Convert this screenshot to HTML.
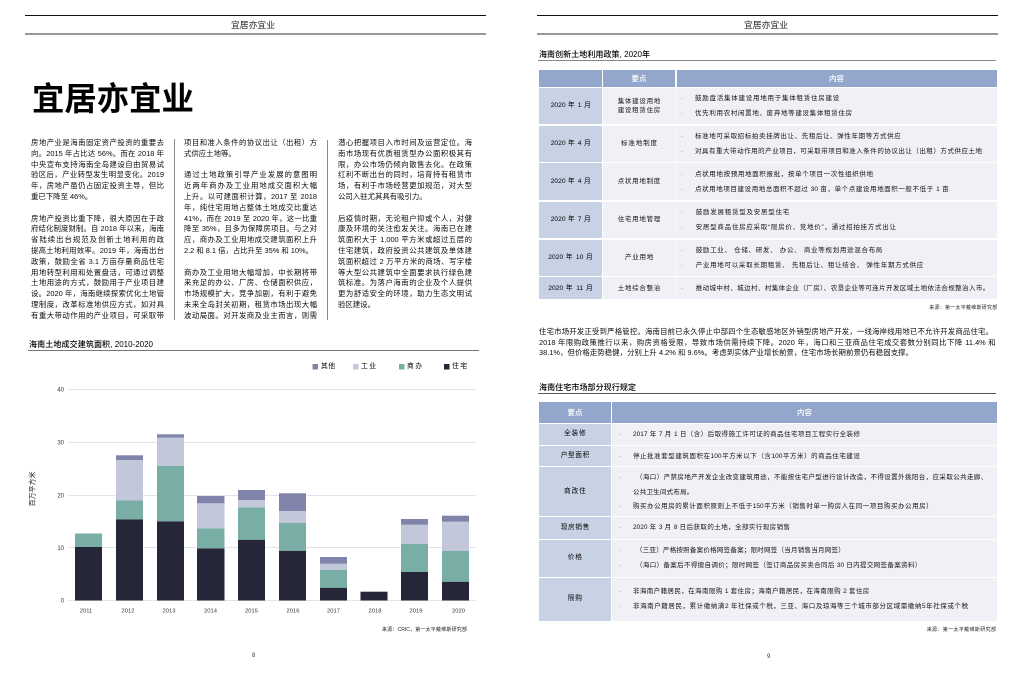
<!DOCTYPE html>
<html lang="zh"><head><meta charset="utf-8"><title>宜居亦宜业</title>
<style>
html,body{margin:0;padding:0;background:#fff}
body{width:1024px;height:678px;overflow:hidden;position:relative;font-family:"Liberation Sans","Noto Sans CJK SC",sans-serif;color:#222}
#p{position:absolute;left:0;top:0;width:1024px;height:678px;filter:blur(.3px)}
.r{position:absolute}
.t{position:absolute;line-height:10px;height:10px;white-space:nowrap}
.j{position:absolute;line-height:10px;height:11px;overflow:hidden;text-align:justify;text-align-last:justify;font-size:6.5px;color:#111}
.b{font-size:7.4px;color:#0c0c0c}
.c{text-align:center;text-align-last:center}
.h{color:#fff;font-size:7.5px;font-weight:500}
.d{position:absolute;width:6px;font-size:6.5px;line-height:10px;height:10px;color:#555}
.m{color:#000;font-size:6.7px}
.s{font-size:5px;color:#222}
.tt{font-size:8px;font-weight:500;color:#000}
</style></head><body><div id="p">

<!-- Page 8 -->
<div class="r" style="left:25px;top:15px;width:461px;height:1px;background:#111"></div>
<div class="r" style="left:25px;top:33px;width:461px;height:2px;background:#999"></div>
<div class="j c" style="left:213px;top:20px;width:80px;font-size:8.8px;color:#222">宜居亦宜业</div>

<div class="t" style="left:32px;top:81.500px;height:34px;line-height:34px;font-size:32.4px;font-weight:700;color:#000">宜居亦宜业</div>

<div class="r" style="left:174px;top:139px;width:1px;height:181px;background:#8a8a8a"></div>
<div class="r" style="left:327px;top:140px;width:1px;height:180px;background:#8a8a8a"></div>

<!-- col 1 -->
<div class="j b" style="left:31px;top:138px;width:133px">房地产业是海南固定资产投资的重要去</div>
<div class="j b" style="left:31px;top:148.8px;width:133px">向。2015 年占比达 56%。而在 2018 年</div>
<div class="j b" style="left:31px;top:159.6px;width:133px">中央宣布支持海南全岛建设自由贸易试</div>
<div class="j b" style="left:31px;top:170.4px;width:133px">验区后，产业转型发生明显变化。2019</div>
<div class="j b" style="left:31px;top:181.2px;width:133px">年，房地产虽仍占固定投资主导，但比</div>
<div class="t b" style="left:31px;top:192px">重已下降至 46%。</div>
<div class="j b" style="left:31px;top:213.6px;width:133px">房地产投资比重下降，很大原因在于政</div>
<div class="j b" style="left:31px;top:224.4px;width:133px">府结化制度财制。自 2018 年以来，海南</div>
<div class="j b" style="left:31px;top:235.2px;width:133px">省陆续出台规范及创新土地利用的政策，</div>
<div class="j b" style="left:31px;top:246px;width:133px">提高土地利用效率。2019 年，海南出台</div>
<div class="j b" style="left:31px;top:256.8px;width:133px">政策，鼓励全省 3.1 万亩存量商品住宅</div>
<div class="j b" style="left:31px;top:267.6px;width:133px">用地转型利用和处置盘活，可通过调整</div>
<div class="j b" style="left:31px;top:278.4px;width:133px">土地用途的方式，鼓励用于产业项目建</div>
<div class="j b" style="left:31px;top:289.2px;width:133px">设。2020 年，海南继续探索优化土地管</div>
<div class="j b" style="left:31px;top:300px;width:133px">理制度，改革标准地供应方式，如对具</div>
<div class="j b" style="left:31px;top:310.8px;width:133px">有重大带动作用的产业项目，可采取带</div>

<!-- col 2 -->
<div class="j b" style="left:184px;top:138px;width:133px">项目和准入条件的协议出让（出租）方</div>
<div class="t b" style="left:184px;top:148.8px">式供应土地等。</div>
<div class="j b" style="left:184px;top:170.4px;width:133px">通过土地政策引导产业发展的意图明显，</div>
<div class="j b" style="left:184px;top:181.2px;width:133px">近两年商办及工业用地成交面积大幅</div>
<div class="j b" style="left:184px;top:192px;width:133px">上升。以可建面积计算，2017 至 2018</div>
<div class="j b" style="left:184px;top:202.8px;width:133px">年，纯住宅用地占整体土地成交比重达</div>
<div class="j b" style="left:184px;top:213.6px;width:133px">41%，而在 2019 至 2020 年，这一比重</div>
<div class="j b" style="left:184px;top:224.4px;width:133px">降至 35%，且多为保障房项目。与之对</div>
<div class="j b" style="left:184px;top:235.2px;width:133px">应，商办及工业用地成交建筑面积上升</div>
<div class="t b" style="left:184px;top:246px">2.2 和 8.1 倍，占比升至 35% 和 10%。</div>
<div class="j b" style="left:184px;top:267.6px;width:133px">商办及工业用地大幅增加，中长期将带</div>
<div class="j b" style="left:184px;top:278.4px;width:133px">来充足的办公、厂房、仓储面积供应，</div>
<div class="j b" style="left:184px;top:289.2px;width:133px">市场规模扩大，竞争加剧，有利于避免</div>
<div class="j b" style="left:184px;top:300px;width:133px">未来全岛封关初期，租赁市场出现大幅</div>
<div class="j b" style="left:184px;top:310.8px;width:133px">波动局面。对开发商及业主而言，则需</div>

<!-- col 3 -->
<div class="j b" style="left:338px;top:138px;width:134px">潜心把握项目入市时间及运营定位。海</div>
<div class="j b" style="left:338px;top:148.8px;width:134px">南市场现有优质租赁型办公面积极其有</div>
<div class="j b" style="left:338px;top:159.6px;width:134px">限，办公市场仍倾向散售去化。在政策</div>
<div class="j b" style="left:338px;top:170.4px;width:134px">红利不断出台的同时，培育持有租赁市</div>
<div class="j b" style="left:338px;top:181.2px;width:134px">场，有利于市场经营更加规范，对大型</div>
<div class="t b" style="left:338px;top:192px">公司入驻尤其具有吸引力。</div>
<div class="j b" style="left:338px;top:213.6px;width:134px">后疫情时期，无论租户抑或个人，对健</div>
<div class="j b" style="left:338px;top:224.4px;width:134px">康及环境的关注愈发关注。海南已在建</div>
<div class="j b" style="left:338px;top:235.2px;width:134px">筑面积大于 1,000 平方米或超过五层的</div>
<div class="j b" style="left:338px;top:246px;width:134px">住宅建筑，政府投资公共建筑及单体建</div>
<div class="j b" style="left:338px;top:256.8px;width:134px">筑面积超过 2 万平方米的商场、写字楼</div>
<div class="j b" style="left:338px;top:267.6px;width:134px">等大型公共建筑中全面要求执行绿色建</div>
<div class="j b" style="left:338px;top:278.4px;width:134px">筑标准。为落户海南的企业及个人提供</div>
<div class="j b" style="left:338px;top:289.2px;width:134px">更为舒适安全的环境，助力生态文明试</div>
<div class="t b" style="left:338px;top:300px">验区建设。</div>

<!-- chart -->
<div class="j tt" style="left:29px;top:340px;width:124px">海南土地成交建筑面积, 2010-2020</div>
<div class="r" style="left:28px;top:350px;width:451px;height:1px;background:#777"></div>

<svg class="r" style="left:0;top:0" width="512" height="678" xmlns="http://www.w3.org/2000/svg">
<g fill="#e2e4ea">
<rect x="68" y="389" width="408" height="1"/><rect x="68" y="442" width="408" height="1"/><rect x="68" y="495" width="408" height="1"/><rect x="68" y="547" width="408" height="1"/><rect x="68" y="600" width="408" height="1"/>
</g>
<g fill="#252638">
<rect x="75" y="547" width="27" height="53.5"/><rect x="116" y="519.3" width="27" height="81.2"/><rect x="157" y="521.3" width="27" height="79.2"/><rect x="197" y="548.3" width="27.5" height="52.2"/><rect x="238" y="539.7" width="27" height="60.8"/><rect x="279" y="550.7" width="27" height="49.8"/><rect x="320" y="587.7" width="27" height="12.8"/><rect x="360.5" y="591.7" width="27" height="8.8"/><rect x="401" y="572" width="27" height="28.5"/><rect x="442" y="581.7" width="27" height="18.8"/>
</g>
<g fill="#78aea5">
<rect x="75" y="533.5" width="27" height="13.5"/><rect x="116" y="500.5" width="27" height="18.8"/><rect x="157" y="466" width="27" height="55.3"/><rect x="197" y="528.3" width="27.5" height="20"/><rect x="238" y="507.3" width="27" height="32.4"/><rect x="279" y="523" width="27" height="27.7"/><rect x="320" y="569.7" width="27" height="18"/><rect x="401" y="544" width="27" height="28"/><rect x="442" y="551" width="27" height="30.7"/>
</g>
<g fill="#c2c7da">
<rect x="116" y="460" width="27" height="40.5"/><rect x="157" y="437.7" width="27" height="28.3"/><rect x="197" y="503.3" width="27.5" height="25"/><rect x="238" y="500" width="27" height="7.3"/><rect x="279" y="511" width="27" height="12"/><rect x="320" y="563.7" width="27" height="6"/><rect x="401" y="524.7" width="27" height="19.3"/><rect x="442" y="521.7" width="27" height="29.3"/>
</g>
<g fill="#8084ab">
<rect x="116" y="455.3" width="27" height="4.7"/><rect x="157" y="434.3" width="27" height="3.4"/><rect x="197" y="496" width="27.5" height="7.3"/><rect x="238" y="490" width="27" height="10"/><rect x="279" y="493.3" width="27" height="17.7"/><rect x="320" y="557" width="27" height="6.7"/><rect x="401" y="519" width="27" height="5.7"/><rect x="442" y="515.7" width="27" height="6"/>
</g>
<rect x="312.500" y="364" width="5.500" height="5.500" fill="#8084ab"/>
<rect x="353" y="364" width="5.500" height="5.500" fill="#c2c7da"/>
<rect x="399" y="364" width="5.500" height="5.500" fill="#78aea5"/>
<rect x="444" y="364" width="5.500" height="5.500" fill="#252638"/>
<g font-family="Liberation Sans, sans-serif" font-size="6" fill="#333" text-anchor="end">
<text x="64" y="391.500">40</text><text x="64" y="444.500">30</text><text x="64" y="497.500">20</text><text x="64" y="550">10</text><text x="64" y="602.500">0</text>
</g>
<g font-family="Liberation Sans, sans-serif" font-size="5.800" fill="#333" text-anchor="middle">
<text x="86" y="612.500">2011</text><text x="128" y="612.500">2012</text><text x="169" y="612.500">2013</text><text x="210.500" y="612.500">2014</text><text x="251.500" y="612.500">2015</text><text x="293" y="612.500">2016</text><text x="333.500" y="612.500">2017</text><text x="375" y="612.500">2018</text><text x="416" y="612.500">2019</text><text x="458.500" y="612.500">2020</text>
</g>
<text transform="translate(34.500 489) rotate(-90)" font-family="Liberation Sans, Noto Sans CJK SC, sans-serif" font-size="7" fill="#222" text-anchor="middle">百万平方米</text>
</svg>

<div class="j m" style="left:321px;top:361.500px;width:14px;font-size:6.800px">其他</div>
<div class="j m" style="left:361px;top:361.500px;width:15px;font-size:6.800px">工业</div>
<div class="j m" style="left:407px;top:361.500px;width:15px;font-size:6.800px">商办</div>
<div class="j m" style="left:452px;top:361.500px;width:15px;font-size:6.800px">住宅</div>

<div class="j s" style="left:382px;top:625px;width:85px">来源：CRIC，第一太平戴维斯研究部</div>
<div class="t" style="left:252px;top:651px;font-size:6px;color:#333">8</div>

<!-- Page 9 -->
<div class="r" style="left:537px;top:15px;width:461px;height:1px;background:#111"></div>
<div class="r" style="left:537px;top:33px;width:461px;height:2px;background:#999"></div>
<div class="j c" style="left:726px;top:20px;width:80px;font-size:8.800px;color:#222">宜居亦宜业</div>

<div class="j tt" style="left:539px;top:49.500px;width:111px">海南创新土地利用政策, 2020年</div>
<div class="r" style="left:538px;top:60px;width:458px;height:1px;background:#888"></div>

<!-- table 1 -->
<div class="r" style="left:539px;top:70px;width:63px;height:17px;background:#93a7cc"></div>
<div class="r" style="left:603px;top:70px;width:72px;height:17px;background:#93a7cc"></div>
<div class="r" style="left:676px;top:70px;width:321px;height:17px;background:#93a7cc"></div>
<div class="j h c" style="left:603px;top:73.500px;width:72px">要点</div>
<div class="j h c" style="left:676px;top:73.500px;width:321px">内容</div>

<div class="r" style="left:539px;top:88px;width:63px;height:36px;background:#c8d2e5"></div><div class="r" style="left:603px;top:88px;width:394px;height:36px;background:#eff1f6"></div>
<div class="r" style="left:539px;top:125.500px;width:63px;height:36.500px;background:#c8d2e5"></div><div class="r" style="left:603px;top:125.500px;width:394px;height:36.500px;background:#eff1f6"></div>
<div class="r" style="left:539px;top:163px;width:63px;height:37px;background:#c8d2e5"></div><div class="r" style="left:603px;top:163px;width:394px;height:37px;background:#eff1f6"></div>
<div class="r" style="left:539px;top:201.500px;width:63px;height:36.500px;background:#c8d2e5"></div><div class="r" style="left:603px;top:201.500px;width:394px;height:36.500px;background:#eff1f6"></div>
<div class="r" style="left:539px;top:239.500px;width:63px;height:36.500px;background:#c8d2e5"></div><div class="r" style="left:603px;top:239.500px;width:394px;height:36.500px;background:#eff1f6"></div>
<div class="r" style="left:539px;top:277px;width:63px;height:22px;background:#c8d2e5"></div><div class="r" style="left:603px;top:277px;width:394px;height:22px;background:#eff1f6"></div>
<div class="r" style="left:675.500px;top:70px;width:1px;height:229px;background:#f6f7fa"></div>

<div class="j m" style="left:550.700px;top:101px;width:40px">2020 年 1 月</div>
<div class="j m" style="left:550.700px;top:139px;width:40px">2020 年 4 月</div>
<div class="j m" style="left:550.700px;top:177px;width:40px">2020 年 4 月</div>
<div class="j m" style="left:550.700px;top:215px;width:40px">2020 年 7 月</div>
<div class="j m" style="left:548.300px;top:253px;width:44.400px">2020 年 10 月</div>
<div class="j m" style="left:548.300px;top:283.700px;width:44.400px">2020 年 11 月</div>

<div class="j" style="left:617.700px;top:96.700px;width:42.600px">集体建设用地</div>
<div class="j" style="left:617.700px;top:106.300px;width:42.600px">建设租赁住房</div>
<div class="j" style="left:621px;top:139px;width:36px">标准地制度</div>
<div class="j" style="left:617.700px;top:177px;width:42.600px">点状用地制度</div>
<div class="j" style="left:617.700px;top:215px;width:42.600px">住宅用地管理</div>
<div class="j" style="left:625px;top:253px;width:28.300px">产业用地</div>
<div class="j" style="left:617.700px;top:283.700px;width:42.600px">土地综合整治</div>

<div class="d" style="left:681px;top:94.300px">·</div><div class="d" style="left:681px;top:108.700px">·</div>
<div class="d" style="left:681px;top:132px">·</div><div class="d" style="left:681px;top:146.700px">·</div>
<div class="d" style="left:681px;top:170px">·</div><div class="d" style="left:681px;top:184.700px">·</div>
<div class="d" style="left:681px;top:208px">·</div><div class="d" style="left:681px;top:222.700px">·</div>
<div class="d" style="left:681px;top:246px">·</div><div class="d" style="left:681px;top:260.700px">·</div>
<div class="d" style="left:681px;top:283.700px">·</div>

<div class="j" style="left:695px;top:94.300px;width:144.300px">鼓励盘活集体建设用地用于集体租赁住房建设</div>
<div class="j" style="left:695px;top:108.700px;width:157px">优先利用农村闲置地、废弃地等建设集体租赁住房</div>
<div class="j" style="left:695px;top:132px;width:205.700px">标准地可采取招标拍卖挂牌出让、先租后让、弹性年期等方式供应</div>
<div class="j" style="left:695px;top:146.700px;width:287px">对具有重大带动作用的产业项目，可采取带项目和准入条件的协议出让（出租）方式供应土地</div>
<div class="j" style="left:695px;top:170px;width:178px">点状用地按预用地面积报批，按单个项目一次性组织供地</div>
<div class="j" style="left:695px;top:184.700px;width:253.700px">点状用地项目建设用地总面积不超过 30 亩，单个点建设用地面积一般不低于 1 亩</div>
<div class="j" style="left:695.700px;top:208px;width:93.600px">鼓励发展租赁型及安居型住宅</div>
<div class="j" style="left:695.700px;top:222.700px;width:200.300px">安居型商品住房应采取“限房价、竞地价”，通过招拍挂方式出让</div>
<div class="j" style="left:695.700px;top:246px;width:186.600px">鼓励工业、 仓储、研发、 办公、 商业等规划用途混合布局</div>
<div class="j" style="left:695.700px;top:260.700px;width:227.600px">产业用地可以采取长期租赁、 先租后让、租让结合、 弹性年期方式供应</div>
<div class="j" style="left:695.700px;top:283.700px;width:293.600px">推动城中村、城边村、村集体企业（厂房）、农垦企业等可连片开发区域土地依法合规整治入市。</div>

<div class="j s" style="left:929.300px;top:303.300px;width:68px">来源：第一太平戴维斯研究部</div>

<!-- paragraph -->
<div class="j b" style="left:539px;top:327px;width:454px">住宅市场开发正受到严格管控。海南目前已永久停止中部四个生态敏感地区外销型房地产开发，一线海岸线用地已不允许开发商品住宅。</div>
<div class="j b" style="left:539px;top:337.700px;width:456.700px">2018 年限购政策推行以来，购房资格受限，导致市场供需持续下降。2020 年，海口和三亚商品住宅成交套数分别同比下降 11.4% 和</div>
<div class="j b" style="left:539px;top:348.300px;width:374px">38.1%，但价格走势稳健，分别上升 4.2% 和 9.6%。考虑到实体产业增长前景，住宅市场长期前景仍有稳固支撑。</div>

<div class="j tt" style="left:539px;top:383.300px;width:97px">海南住宅市场部分现行规定</div>
<div class="r" style="left:538px;top:393px;width:458px;height:1px;background:#555"></div>

<!-- table 2 -->
<div class="r" style="left:539px;top:402px;width:72px;height:21px;background:#93a7cc"></div>
<div class="r" style="left:612px;top:402px;width:385px;height:21px;background:#93a7cc"></div>
<div class="j h c" style="left:539px;top:408px;width:72px">要点</div>
<div class="j h c" style="left:612px;top:408px;width:385px">内容</div>

<div class="r" style="left:539px;top:424px;width:72px;height:21px;background:#c8d2e5"></div><div class="r" style="left:612px;top:424px;width:385px;height:21px;background:#eff1f6"></div>
<div class="r" style="left:539px;top:446px;width:72px;height:20px;background:#c8d2e5"></div><div class="r" style="left:612px;top:446px;width:385px;height:20px;background:#eff1f6"></div>
<div class="r" style="left:539px;top:467px;width:72px;height:49px;background:#c8d2e5"></div><div class="r" style="left:612px;top:467px;width:385px;height:49px;background:#eff1f6"></div>
<div class="r" style="left:539px;top:517px;width:72px;height:21.500px;background:#c8d2e5"></div><div class="r" style="left:612px;top:517px;width:385px;height:21.500px;background:#eff1f6"></div>
<div class="r" style="left:539px;top:540px;width:72px;height:37px;background:#c8d2e5"></div><div class="r" style="left:612px;top:540px;width:385px;height:37px;background:#eff1f6"></div>
<div class="r" style="left:539px;top:578px;width:72px;height:43px;background:#c8d2e5"></div><div class="r" style="left:612px;top:578px;width:385px;height:43px;background:#eff1f6"></div>

<div class="j m" style="left:564px;top:429.300px;width:21.700px">全装修</div>
<div class="j m" style="left:560.700px;top:451.300px;width:28.600px">户型面积</div>
<div class="j m" style="left:564px;top:486.700px;width:21.700px">商改住</div>
<div class="j m" style="left:560.700px;top:523px;width:28.600px">现房销售</div>
<div class="j m" style="left:567.700px;top:553.300px;width:14.300px">价格</div>
<div class="j m" style="left:567.700px;top:594.300px;width:14.300px">限购</div>

<div class="d" style="left:619px;top:429.700px">·</div><div class="d" style="left:619px;top:451.700px">·</div>
<div class="d" style="left:619px;top:473.300px">·</div><div class="d" style="left:619px;top:502px">·</div>
<div class="d" style="left:619px;top:523px">·</div>
<div class="d" style="left:619px;top:546.300px">·</div><div class="d" style="left:619px;top:561px">·</div>
<div class="d" style="left:619px;top:587.300px">·</div><div class="d" style="left:619px;top:602px">·</div>

<div class="j" style="left:633px;top:429.700px;width:227px">2017 年 7 月 1 日（含）后取得施工许可证的商品住宅项目工程实行全装修</div>
<div class="j" style="left:633px;top:451.700px;width:227px">停止批准套型建筑面积在100平方米以下（含100平方米）的商品住宅建设</div>
<div class="j" style="left:636px;top:473.300px;width:351.300px">（海口）严禁房地产开发企业改变建筑用途，不能按住宅户型进行设计改造，不得设置外挑阳台，应采取公共走廊、</div>
<div class="j" style="left:633px;top:487.700px;width:60.300px">公共卫生间式布局。</div>
<div class="j" style="left:633px;top:502px;width:299.700px">购买办公用房的累计面积原则上不低于150平方米（销售时单一购房人在同一项目购买办公用房）</div>
<div class="j" style="left:633px;top:523px;width:157px">2020 年 3 月 8 日后获取的土地，全部实行现房销售</div>
<div class="j" style="left:636px;top:546.300px;width:208.700px">（三亚）严格按照备案价格网签备案；限时网签（当月销售当月网签）</div>
<div class="j" style="left:636px;top:561px;width:285.300px">（海口）备案后不得擅自调价；限时网签（签订商品房买卖合同后 30 日内提交网签备案资料）</div>
<div class="j" style="left:633px;top:587.300px;width:236.300px">非海南户籍居民，在海南限购 1 套住房；海南户籍居民，在海南限购 2 套住房</div>
<div class="j" style="left:633px;top:602px;width:335px">非海南户籍居民，累计缴纳满2 年社保或个税，三亚、海口及琼海等三个城市部分区域需缴纳5年社保或个税</div>

<div class="j s" style="left:926.700px;top:625px;width:69.300px">来源：第一太平戴维斯研究部</div>
<div class="t" style="left:767px;top:652px;font-size:6px;color:#333">9</div>

</div></body></html>
